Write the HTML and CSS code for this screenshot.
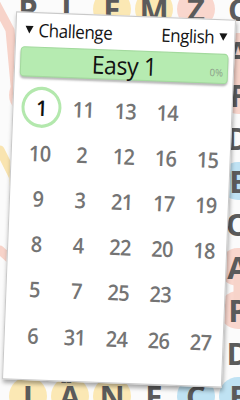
FILE: index.html
```html
<!DOCTYPE html>
<html>
<head>
<meta charset="utf-8">
<link rel="stylesheet" href="styles.css">
</head>
<body>
<div class="board">
  <svg class="paths" width="240" height="400" viewBox="0 0 240 400">
    <path d="M-6 0 L10 30 L16 96" class="pk"/>
    <path d="M0 150 L20 190" class="yl"/>
    <path d="M0 250 L22 270" class="pk"/>
    <path d="M238 52 L238 95" class="pk"/>
    <path d="M238 267 L238 310" class="pk"/>
  </svg>
  <div class="tiles">
    <div class="t">P</div><div class="t">L</div><div class="t y">E</div><div class="t y">M</div><div class="t p">Z</div><div class="t">C</div>
    <div class="t g">R</div><div class="t">O</div><div class="t">S</div><div class="t">T</div><div class="t">N</div><div class="t p">A</div>
    <div class="t p">E</div><div class="t">A</div><div class="t">I</div><div class="t">L</div><div class="t">U</div><div class="t p">F</div>
    <div class="t">S</div><div class="t">T</div><div class="t">R</div><div class="t">E</div><div class="t">M</div><div class="t">D</div>
    <div class="t y">O</div><div class="t">N</div><div class="t">A</div><div class="t">S</div><div class="t">T</div><div class="t b">E</div>
    <div class="t">T</div><div class="t">I</div><div class="t">E</div><div class="t">R</div><div class="t">L</div><div class="t">O</div>
    <div class="t p">H</div><div class="t">U</div><div class="t">G</div><div class="t">O</div><div class="t">N</div><div class="t p">A</div>
    <div class="t p">B</div><div class="t">E</div><div class="t">L</div><div class="t">A</div><div class="t">S</div><div class="t p">P</div>
    <div class="t y">V</div><div class="t">R</div><div class="t">T</div><div class="t">E</div><div class="t">I</div><div class="t">D</div>
    <div class="t y">I</div><div class="t y">A<span class="sup">22</span></div><div class="t y">N</div><div class="t">E<span class="sup">28</span></div><div class="t b">C<span class="sup">15</span></div><div class="t b">E</div>
  </div>
</div>

<div class="panel">
  <div class="head">
    <span class="sel"><span class="tri"></span><span class="lbl">Challenge</span></span>
    <span class="sel"><span class="lbl">English</span><span class="tri"></span></span>
  </div>
  <div class="bar">
    <span></span>
    <span class="title">Easy 1</span>
    <span class="pct">0%</span>
  </div>
  <div class="grid">
    <div class="n cur"><span>1</span></div><div class="n">11</div><div class="n">13</div><div class="n">14</div><div class="n"></div>
    <div class="n">10</div><div class="n">2</div><div class="n">12</div><div class="n">16</div><div class="n">15</div>
    <div class="n">9</div><div class="n">3</div><div class="n">21</div><div class="n">17</div><div class="n">19</div>
    <div class="n">8</div><div class="n">4</div><div class="n">22</div><div class="n">20</div><div class="n">18</div>
    <div class="n">5</div><div class="n">7</div><div class="n">25</div><div class="n">23</div><div class="n"></div>
    <div class="n">6</div><div class="n">31</div><div class="n">24</div><div class="n">26</div><div class="n">27</div>
  </div>
</div>
</body>
</html>
```

FILE: styles.css
```css
html, body {
  margin: 0;
  padding: 0;
}
body {
  width: 240px;
  height: 400px;
  overflow: hidden;
  position: relative;
  background: #fbfbfb;
  font-family: "Open Sans", "DejaVu Sans", sans-serif;
}

/* background game board */
.board {
  position: absolute;
  inset: 0;
  overflow: hidden;
}
.paths {
  position: absolute;
  left: 0;
  top: 0;
}
.paths path {
  fill: none;
  stroke-width: 9;
  stroke-linecap: round;
  stroke-linejoin: round;
}
.paths .pk { stroke: #f7d3c9; }
.paths .yl { stroke: #f9e4b0; }

.tiles {
  position: absolute;
  left: 7px;
  top: -12px;
  display: grid;
  grid-template-columns: repeat(6, 42px);
  grid-auto-rows: 43px;
}
.t {
  position: relative;
  display: flex;
  align-items: center;
  justify-content: center;
  font-size: 31px;
  font-weight: 700;
  color: #5b5b5b;
  line-height: 1;
}
.t::before {
  content: "";
  position: absolute;
  left: 2px;
  top: 2px;
  width: 38px;
  height: 38px;
  border-radius: 50%;
  z-index: -1;
}
.t.y::before { background: #fbe8b4; }
.t.p::before { background: #f9d6cd; }
.t.b::before { background: #bfe2f3; }
.t.g::before { background: #8fdc7e; }
.sup {
  position: absolute;
  left: 12px;
  top: 0;
  font-size: 9px;
  font-weight: 700;
  color: #6a6a6a;
}

/* popup panel */
.panel {
  position: absolute;
  left: 9px;
  top: 29px;
  width: 220px;
  height: 341px;
  box-sizing: border-box;
  background: #ffffff;
  border: 1px solid #c9c9c9;
  box-shadow: 1px 3px 4px rgba(0, 0, 0, 0.35);
  transform: rotate(2.2deg) scaleY(1.08);
  transform-origin: 50% 50%;
}
.head {
  display: flex;
  justify-content: space-between;
  align-items: center;
  height: 30px;
  padding: 0 7px 0 9px;
}
.sel {
  display: flex;
  align-items: center;
  gap: 5px;
  color: #141414;
}
.lbl {
  font-size: 17px;
  letter-spacing: -0.45px;
  line-height: 1;
}
.tri {
  width: 0;
  height: 0;
  border-left: 4.5px solid transparent;
  border-right: 4.5px solid transparent;
  border-top: 7.5px solid #151515;
}
.bar {
  margin: 1px 5px 0;
  height: 28px;
  box-sizing: border-box;
  background: #b6ebb1;
  border: 1px solid #a3da9e;
  border-radius: 4px;
  box-shadow: 0 2px 2px rgba(0, 0, 0, 0.28);
  display: grid;
  grid-template-columns: 1fr auto 1fr;
  align-items: center;
}
.title {
  font-size: 23px;
  color: #111;
  line-height: 1;
  letter-spacing: -0.4px;
}
.pct {
  justify-self: end;
  align-self: end;
  font-size: 9.5px;
  color: #8c9c89;
  padding: 0 4px 5px 0;
  line-height: 1;
}
.grid {
  display: grid;
  grid-template-columns: repeat(5, 42px);
  grid-auto-rows: 42.2px;
  padding: 7px 0 0 7px;
}
.n {
  display: flex;
  align-items: center;
  justify-content: center;
  font-size: 20px;
  font-weight: 600;
  color: #747474;
  letter-spacing: -0.6px;
}
.n.cur span {
  width: 40px;
  height: 38px;
  box-sizing: border-box;
  border: 3.5px solid #b3e8ad;
  border-radius: 50%;
  display: flex;
  align-items: center;
  justify-content: center;
  color: #111;
}
```
